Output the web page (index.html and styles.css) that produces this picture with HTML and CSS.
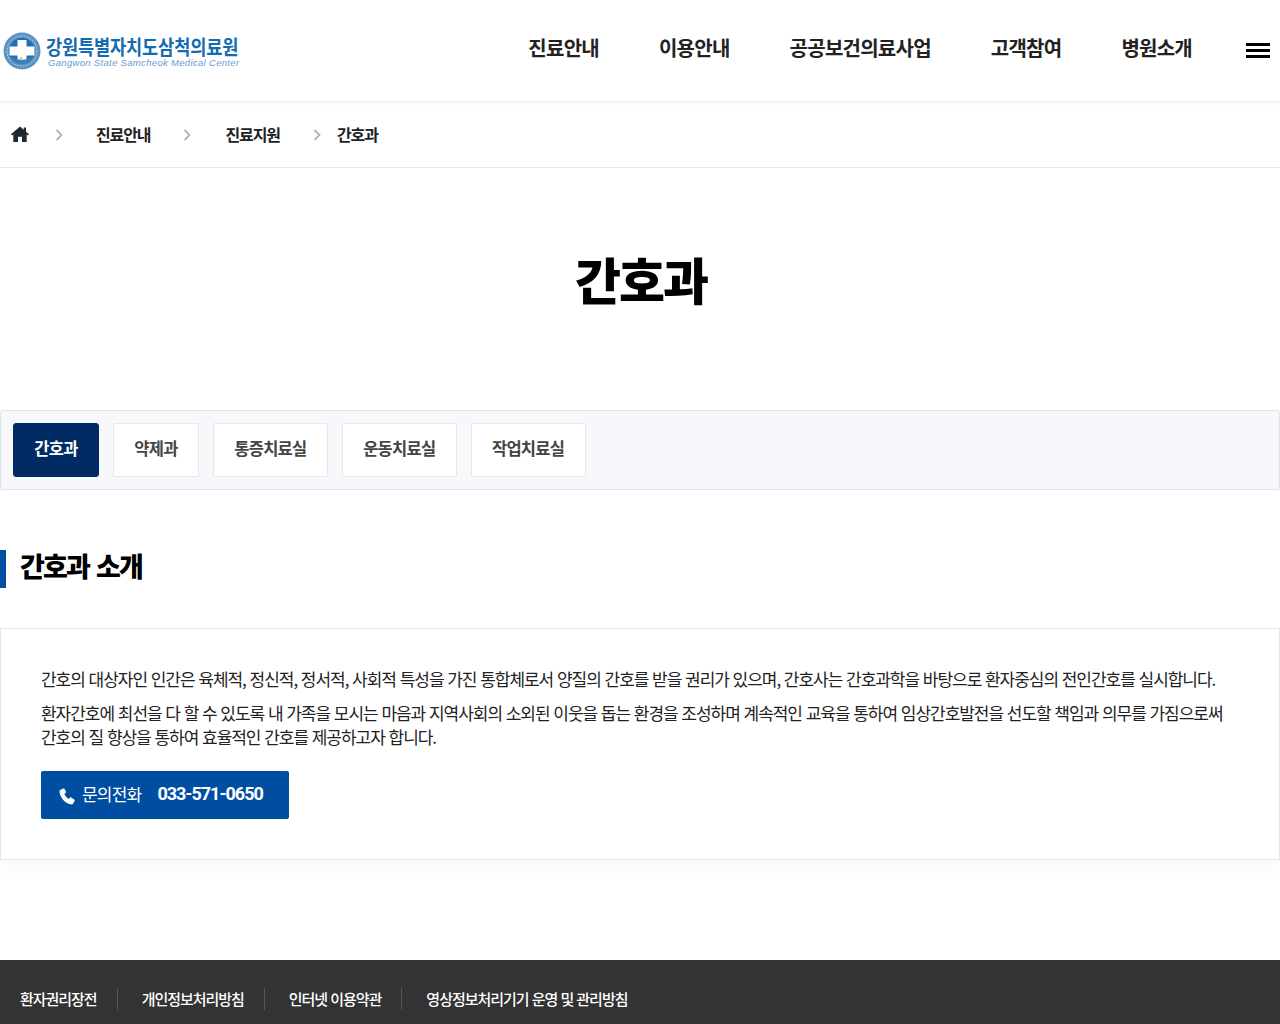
FILE: index.html
```html
<!doctype html>
<html lang="ko">
<head>
    <meta charset="utf-8">
    <meta name="viewport" content="width=device-width, initial-scale=1">
    <title>간호과 - 강원특별자치도삼척의료원</title>
    <link rel="stylesheet" href="styles.css">
</head>
<body>
<header class="header">
    <a class="logo" href="#">
        <svg class="logo-mark" width="38" height="38" viewBox="0 0 38 38">
            <circle cx="19" cy="19" r="18.5" fill="#5d93c4"/>
            <circle cx="19" cy="19" r="15" fill="none" stroke="#cfe0ef" stroke-width="1" stroke-dasharray="1.5 1.5"/>
            <circle cx="19" cy="19" r="13" fill="#1f6fb2"/>
            <path d="M14.5 8h9v6.500h8v9h-8v6.500h-9v-6.500h-8v-9h8z" fill="#fff"/>
            <path d="M8 24c5 5 17 5 22 0l-3 6c-5 3-11 3-16 0z" fill="#3d7fb8"/>
            <circle cx="18" cy="26" r="1.300" fill="#e3c34a"/>
        </svg>
        <span class="logo-text">
            <strong>강원특별자치도삼척의료원</strong>
            <em>Gangwon State Samcheok Medical Center</em>
        </span>
    </a>
    <nav class="gnb">
        <a href="#">진료안내</a>
        <a href="#">이용안내</a>
        <a href="#">공공보건의료사업</a>
        <a href="#">고객참여</a>
        <a href="#">병원소개</a>
    </nav>
    <button class="menu-btn" aria-label="전체메뉴"><span></span><span></span><span></span></button>
</header>

<div class="crumbs">
    <a class="crumb-home" href="#" aria-label="홈">
        <svg width="18" height="16" viewBox="0 0 18 16"><path d="M9 .5 0 8.300l1 1.100 1.300-1V16h4.700v-5.200h4V16h4.700V8.400l1.300 1 1-1.100-3-2.600V1.500h-2.300v2.200z" fill="#1f2933"/></svg>
    </a>
    <svg class="crumb-arrow arrow-first" width="8" height="12" viewBox="0 0 8 12"><path d="M1.500 1 6.500 6l-5 5" fill="none" stroke="#b4b4b4" stroke-width="1.800"/></svg>
    <a class="crumb crumb-a" href="#">진료안내</a>
    <svg class="crumb-arrow" width="8" height="12" viewBox="0 0 8 12"><path d="M1.500 1 6.500 6l-5 5" fill="none" stroke="#b4b4b4" stroke-width="1.800"/></svg>
    <a class="crumb crumb-b" href="#">진료지원</a>
    <svg class="crumb-arrow" width="8" height="12" viewBox="0 0 8 12"><path d="M1.500 1 6.500 6l-5 5" fill="none" stroke="#b4b4b4" stroke-width="1.800"/></svg>
    <span class="crumb crumb-c">간호과</span>
</div>

<h1 class="page-title">간호과</h1>

<div class="tabs">
    <a class="tab active" href="#">간호과</a>
    <a class="tab" href="#">약제과</a>
    <a class="tab" href="#">통증치료실</a>
    <a class="tab" href="#">운동치료실</a>
    <a class="tab" href="#">작업치료실</a>
</div>

<h2 class="section-title">간호과 소개</h2>

<section class="intro">
    <p>간호의 대상자인 인간은 육체적, 정신적, 정서적, 사회적 특성을 가진 통합체로서 양질의 간호를 받을 권리가 있으며, 간호사는 간호과학을 바탕으로 환자중심의 전인간호를 실시합니다.</p>
    <p>환자간호에 최선을 다 할 수 있도록 내 가족을 모시는 마음과 지역사회의 소외된 이웃을 돕는 환경을 조성하며 계속적인 교육을 통하여 임상간호발전을 선도할 책임과 의무를 가짐으로써<br>간호의 질 향상을 통하여 효율적인 간호를 제공하고자 합니다.</p>
    <a class="call" href="#">
        <svg width="16" height="17" viewBox="0 0 16 17"><path d="M4.300.6 1.500 1.800C.6 2.300.4 3.200.6 4.400 1.400 9.600 6 15 11.500 16.300c1.200.3 2.100 0 2.700-.9l1.400-2.500c.3-.6.100-1.100-.4-1.500l-3-1.900c-.5-.3-1-.2-1.400.2l-1.100 1.300C8 10 6 7.700 5.300 6l1.300-.9c.5-.4.600-.9.400-1.400L5.500 1c-.3-.5-.7-.6-1.200-.4z" fill="#fff"/></svg>
        <span class="call-label">문의전화</span>
        <strong>033-571-0650</strong>
    </a>
</section>

<footer class="footer">
    <a href="#">환자권리장전</a>
    <a href="#">개인정보처리방침</a>
    <a href="#">인터넷 이용약관</a>
    <a href="#">영상정보처리기기 운영 및 관리방침</a>
</footer>
</body>
</html>
```

FILE: styles.css
```css
html, body {
    margin: 0;
    background: #fff;
}
body {
    height: 1024px;
    overflow: hidden;
    font-family: "Noto Sans CJK KR", "Noto Sans", sans-serif;
    color: #222;
}
a {
    color: inherit;
    text-decoration: none;
}

.header {
    display: flex;
    align-items: center;
    height: 101px;
    box-sizing: border-box;
    padding-left: 3px;
    box-shadow: 0 1px 4px rgba(0, 0, 0, 0.1);
}
.logo {
    display: flex;
    align-items: center;
    gap: 5px;
    margin-top: 1px;
}
.logo-text {
    display: flex;
    flex-direction: column;
}
.logo-text strong {
    padding-top: 4px;
    font-family: "Liberation Sans", "Noto Sans CJK KR", sans-serif;
    font-size: 20px;
    line-height: 20px;
    font-weight: 700;
    letter-spacing: -0.2px;
    color: #136bb0;
    white-space: nowrap;
    transform: scaleX(0.88);
    transform-origin: left center;
}
.logo-text em {
    margin: -1px 0 0 2px;
    font-family: "Liberation Sans", sans-serif;
    font-size: 9.5px;
    line-height: 11px;
    font-weight: 400;
    letter-spacing: 0.32px;
    color: #6c9ccb;
    white-space: nowrap;
}
.gnb {
    display: flex;
    gap: 60px;
    margin-left: auto;
    margin-top: -6px;
}
.gnb a {
    font-size: 20px;
    font-weight: 700;
    letter-spacing: -0.75px;
    color: #222;
    white-space: nowrap;
}
.menu-btn {
    display: flex;
    flex-direction: column;
    gap: 3px;
    margin: -1px 10px 0 54px;
    padding: 0;
    border: 0;
    background: none;
}
.menu-btn span {
    display: block;
    width: 24px;
    height: 3px;
    background: #000;
}

.crumbs {
    display: flex;
    align-items: center;
    height: 67px;
    padding-left: 11px;
    border-bottom: 1px solid #e9e9e9;
    box-sizing: border-box;
    font-size: 16px;
    font-weight: 700;
    letter-spacing: -1.1px;
    color: #222;
}
.crumb-home {
    display: flex;
}
.crumb-arrow {
    flex: none;
    margin-top: 2px;
}
.arrow-first {
    margin-left: 26px;
}
.crumb-a {
    margin: 0 33px 0 33px;
}
.crumb-b {
    margin: 0 33px 0 34px;
}
.crumb-c {
    margin-left: 16px;
}

.page-title {
    margin: 0;
    padding: 74px 0 0 2px;
    height: 242px;
    box-sizing: border-box;
    text-align: center;
    font-size: 50px;
    line-height: 72px;
    font-weight: 900;
    letter-spacing: -2px;
    color: #000;
}

.tabs {
    display: flex;
    gap: 14px;
    height: 80px;
    box-sizing: border-box;
    padding: 12px;
    background: #f6f8fb;
    border: 1px solid #dfe3e8;
    border-radius: 3px;
}
.tab {
    display: flex;
    align-items: center;
    padding: 0 20.35px 4px;
    background: #fff;
    border: 1px solid #e8e8e8;
    border-radius: 2px;
    font-size: 16.500px;
    font-weight: 700;
    letter-spacing: -0.75px;
    color: #444;
}
.tab.active {
    background: #002c63;
    border-color: #002c63;
    border-radius: 3px;
    color: #fff;
}

.section-title {
    margin: 60px 0 40px;
    height: 38px;
    padding-left: 14px;
    border-left: 6px solid #004ea2;
    font-size: 27px;
    line-height: 32px;
    font-weight: 900;
    letter-spacing: -1.8px;
    word-spacing: 1px;
    color: #000;
}

.intro {
    height: 232px;
    box-sizing: border-box;
    padding: 38px 40px 0;
    border: 1px solid #e6e6e6;
    box-shadow: 0 6px 16px rgba(0, 0, 0, 0.03);
    font-size: 17px;
    line-height: 24px;
    letter-spacing: -1.03px;
    color: #222;
}
.intro p {
    margin: 0 0 10px;
    white-space: nowrap;
}
.call {
    display: flex;
    align-items: center;
    width: 248px;
    height: 48px;
    box-sizing: border-box;
    margin-top: 22px;
    padding: 0 18px;
    background: #004ea2;
    border-radius: 2px;
    letter-spacing: -0.8px;
    white-space: nowrap;
    color: #fff;
}
.call svg {
    flex: none;
    margin: 2px 7px 0 0;
}
.call-label {
    margin-right: 16px;
    margin-top: -3px;
}
.call strong {
    margin-top: -3px;
    font-family: Roboto, sans-serif;
    font-size: 18px;
    font-weight: 700;
    letter-spacing: -1px;
}

.footer {
    display: flex;
    align-items: flex-start;
    height: 64px;
    margin-top: 100px;
    padding: 28px 0 0 20px;
    box-sizing: border-box;
    background: #333;
    color: #fff;
    font-size: 15px;
    font-weight: 500;
    letter-spacing: -1.03px;
}
.footer a {
    padding-right: 20px;
    margin-right: 24px;
    border-right: 1px solid #555;
    line-height: 22px;
}
.footer a:last-child {
    border-right: 0;
}
```
